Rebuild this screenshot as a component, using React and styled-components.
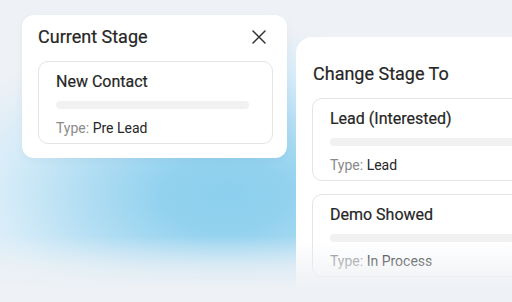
import React from 'react';
import styled, { createGlobalStyle } from 'styled-components';

const GlobalStyle = createGlobalStyle`
  * { box-sizing: border-box; }
  body {
    margin: 0;
    font-family: Roboto, "Noto Sans", Arial, sans-serif;
    color: #2b2b2b;
  }
`;

const currentStage = { name: 'New Contact', type: 'Pre Lead' };

const nextStages = [
  { id: 'lead', name: 'Lead (Interested)', type: 'Lead' },
  { id: 'demo', name: 'Demo Showed', type: 'In Process' },
];

const CloseIcon = () => (
  <svg width="14" height="14" viewBox="0 0 14 14" fill="none">
    <path d="M1 1L13 13M13 1L1 13" stroke="#333" strokeWidth="1.5" strokeLinecap="round" />
  </svg>
);

const StageCard = ({ name, type }) => (
  <Card>
    <StageName>{name}</StageName>
    <Bar />
    <TypeLine>
      <TypeLabel>Type:</TypeLabel> {type}
    </TypeLine>
  </Card>
);

export default function App() {
  return (
    <>
      <GlobalStyle />
      <Page>
        <CurrentPanel>
          <PanelHeader>
            <PanelTitle>Current Stage</PanelTitle>
            <CloseButton aria-label="Close">
              <CloseIcon />
            </CloseButton>
          </PanelHeader>
          <StageCard name={currentStage.name} type={currentStage.type} />
        </CurrentPanel>
        <ChangePanel>
          <PanelTitle>Change Stage To</PanelTitle>
          <StageList>
            {nextStages.map(stage => (
              <StageCard key={stage.id} name={stage.name} type={stage.type} />
            ))}
          </StageList>
        </ChangePanel>
      </Page>
    </>
  );
}

const Page = styled.div`
  width: 512px;
  height: 302px;
  overflow: hidden;
  display: flex;
  align-items: flex-start;
  padding: 15px 0 0 22px;
  background:
    linear-gradient(to bottom, rgba(238, 241, 245, 0) 236px, rgba(238, 241, 245, 0.7) 266px, #eef1f5 290px),
    radial-gradient(ellipse 300px 170px at 225px 195px, #8bcfee 0%, #93d2ef 22%, #b3def3 48%, #d6ecf8 74%, rgba(238, 241, 245, 0) 100%),
    #eef1f5;
`;

const CurrentPanel = styled.section`
  flex: none;
  width: 265px;
  background: #fff;
  border-radius: 12px;
  padding: 10px 14px 14px 16px;
  box-shadow: 0 2px 10px rgba(40, 60, 80, 0.04);
`;

const PanelHeader = styled.div`
  display: flex;
  align-items: center;
  justify-content: space-between;
  margin-bottom: 12px;
`;

const PanelTitle = styled.h2`
  margin: 0;
  font-size: 18px;
  line-height: 24px;
  font-weight: 400;
  color: #262626;
  -webkit-text-stroke: 0.2px #262626;
`;

const CloseButton = styled.button`
  display: flex;
  border: 0;
  background: none;
  padding: 0;
  margin-right: 7px;
  cursor: pointer;
`;

const ChangePanel = styled.section`
  position: relative;
  flex: none;
  width: 260px;
  height: 290px;
  margin: 22px 0 0 9px;
  background: linear-gradient(to bottom, #fff 0%, #fff 70%, #f6f8fa 100%);
  border-radius: 16px 0 0 0;
  padding: 25px 0 0 16px;

  h2 { margin-left: 1px; }

  &::after {
    content: '';
    position: absolute;
    inset: 0;
    pointer-events: none;
    background: linear-gradient(to bottom, rgba(238, 241, 245, 0) 205px, rgba(238, 241, 245, 0.7) 238px, #eef1f5 256px);
  }
`;

const StageList = styled.div`
  display: flex;
  flex-direction: column;
  gap: 13px;
  margin-top: 12px;
`;

const Card = styled.div`
  border: 1px solid #e4e4e4;
  border-radius: 10px;
  padding: 10px 16px 0 17px;
  height: 83px;
  background: #fff;
`;

const StageName = styled.div`
  font-size: 16px;
  line-height: 20px;
  font-weight: 400;
  color: #262626;
  -webkit-text-stroke: 0.2px #262626;
`;

const Bar = styled.div`
  height: 8px;
  margin: 9px 7px 0 0;
  border-radius: 4px;
  background: #f1f1f1;
`;

const TypeLine = styled.div`
  margin-top: 10px;
  font-size: 14px;
  line-height: 18px;
  font-weight: 400;
  color: #262626;
`;

const TypeLabel = styled.span`
  color: #8a8a8a;
`;
